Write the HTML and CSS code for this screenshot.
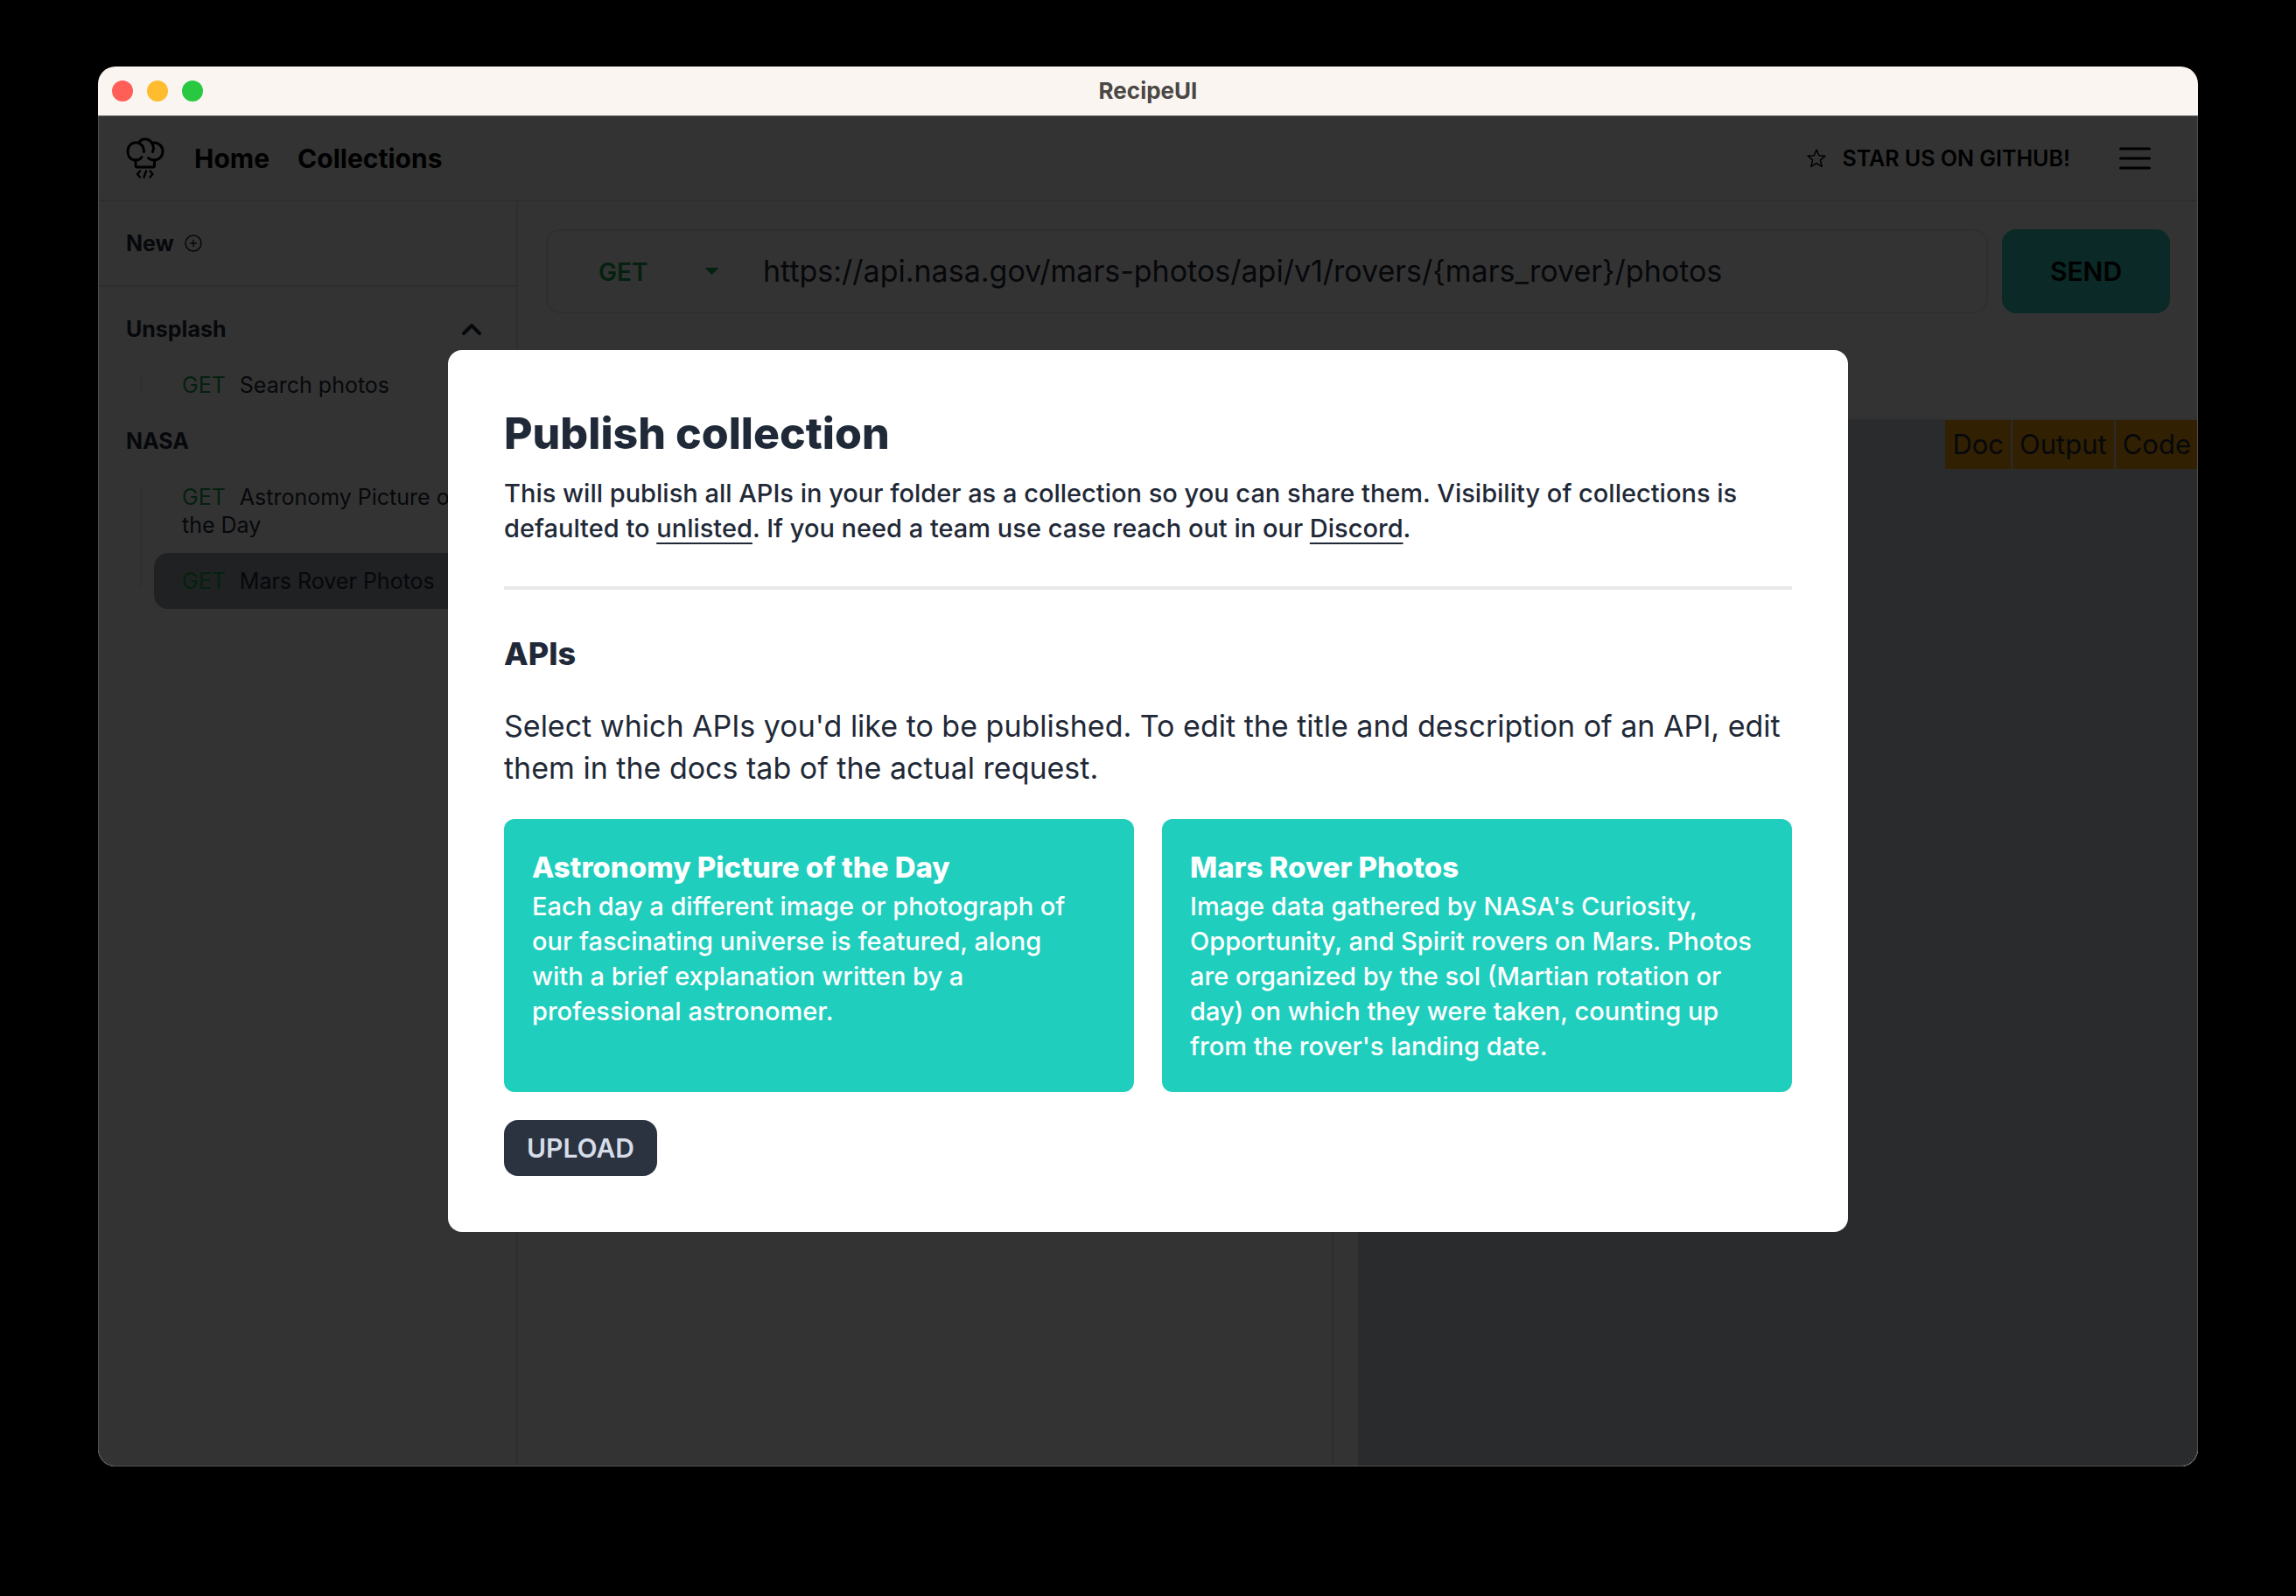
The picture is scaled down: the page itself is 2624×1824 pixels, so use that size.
FILE: index.html
```html
<!DOCTYPE html>
<html lang="en">
<head>
<meta charset="utf-8">
<meta name="viewport" content="width=device-width, initial-scale=1">
<title>RecipeUI</title>
<link rel="stylesheet" href="styles.css">
</head>
<body>
<div class="window">
  <header class="titlebar">
    <div class="lights"><span class="light red"></span><span class="light yellow"></span><span class="light green"></span></div>
    <span class="titlebar-name">RecipeUI</span>
  </header>
  <div class="app">
    <nav class="navbar">
      <a href="#" class="logo" aria-label="RecipeUI">
        <svg viewBox="0 0 44 48" width="44" height="48" fill="none" stroke="#000" stroke-width="3" stroke-linecap="round" stroke-linejoin="round">
          <path d="M11 26V32Q11 34 13 34H30.500Q32.500 34 32.500 32V26"/>
          <path d="M11 26C5 26 2 21.500 2 16C2 10 6 6 11.500 6C12.500 6 13.500 6 14.500 6.500C16 3.500 18.500 2 21.500 2C25 2 28 3.500 29.500 6.500C30.500 6 31.500 6 32.500 6C38 6.500 42 10.500 42 16C42 21.500 38 26 32.500 26"/>
          <path d="M14.500 6.500C18.500 8 20.500 11.500 20.500 16.500M29.500 6.500C32 10 32 13 30.500 16.500M11 26C14.500 26 16.500 25 18 22.500M32.500 26C29 26 27 25 25.500 23.500"/>
          <path stroke-width="2.400" d="M16 38.500L13 42L16 45.500M23 38.500L20.500 45.500M27.500 38.500L30.500 42L27.500 45.500"/>
        </svg>
      </a>
      <a href="#" class="nav-link">Home</a>
      <a href="#" class="nav-link">Collections</a>
      <a href="#" class="star-link">
        <svg viewBox="0 0 20 20" width="22" height="22" fill="none" stroke="#000" stroke-width="1.400" stroke-linejoin="round"><path d="M10 1L12.500 7L19 7.500L14 11.700L15.600 18.500L10 15L4.400 18.500L6 11.700L1 7.500L7.500 7Z"/></svg>
        STAR US ON GITHUB!
      </a>
      <button class="menu-button" aria-label="Menu">
        <svg viewBox="0 0 36 26" width="36" height="26" stroke="#000" stroke-width="3" stroke-linecap="round"><path d="M1.500 2H34.500M1.500 13H34.500M1.500 24H34.500"/></svg>
      </button>
    </nav>
    <div class="body">
      <aside class="sidebar">
        <button class="new-button">New
          <svg viewBox="0 0 20 20" width="20" height="20" fill="none" stroke="#1f2937" stroke-width="1.500" stroke-linecap="round"><circle cx="10" cy="10" r="9"/><path d="M10 6.500V13.500M6.500 10H13.500"/></svg>
        </button>
        <div class="tree">
          <button class="folder">Unsplash
            <svg viewBox="0 0 22 14" width="22" height="14" fill="none" stroke="#1f2937" stroke-width="4" stroke-linecap="round" stroke-linejoin="round"><path d="M2 12L11 3L20 12"/></svg>
          </button>
          <ul class="requests">
            <li><a href="#" class="request"><span class="verb">GET</span>Search photos</a></li>
          </ul>
          <button class="folder">NASA</button>
          <ul class="requests">
            <li><a href="#" class="request"><span class="verb">GET</span>Astronomy Picture of the Day</a></li>
            <li><a href="#" class="request selected"><span class="verb">GET</span>Mars Rover Photos</a></li>
          </ul>
        </div>
      </aside>
      <main class="main">
        <div class="urlbar">
          <div class="urlbox">
            <select class="method" aria-label="Method"><option>GET</option></select>
            <input class="url" aria-label="URL" value="https://api.nasa.gov/mars-photos/api/v1/rovers/{mars_rover}/photos">
          </div>
          <button class="send">SEND</button>
        </div>
        <div class="panes">
          <div class="pane-left"></div>
          <div class="pane-right">
            <div class="tabs">
              <button class="tab">Doc</button>
              <button class="tab">Output</button>
              <button class="tab">Code</button>
            </div>
          </div>
        </div>
      </main>
    </div>
    <div class="backdrop">
      <section class="modal" role="dialog" aria-labelledby="modal-title">
        <h1 class="modal-title" id="modal-title">Publish collection</h1>
        <p class="lead">This will publish all APIs in your folder as a collection so you can share them. Visibility of collections is defaulted to <span class="underlined">unlisted</span>. If you need a team use case reach out in our <a href="#">Discord</a>.</p>
        <hr class="divider">
        <h2 class="section-title">APIs</h2>
        <p class="hint">Select which APIs you'd like to be published. To edit the title and description of an API, edit them in the docs tab of the actual request.</p>
        <div class="cards">
          <button class="card">
            <span class="card-title">Astronomy Picture of the Day</span>
            <span class="card-text">Each day a different image or photograph of our fascinating universe is featured, along with a brief explanation written by a professional astronomer.</span>
          </button>
          <button class="card">
            <span class="card-title">Mars Rover Photos</span>
            <span class="card-text">Image data gathered by NASA's Curiosity, Opportunity, and Spirit rovers on Mars. Photos are organized by the sol (Martian rotation or day) on which they were taken, counting up from the rover's landing date.</span>
          </button>
        </div>
        <button class="upload">UPLOAD</button>
      </section>
    </div>
  </div>
</div>
</body>
</html>
```
FILE: styles.css
```css
*, *::before, *::after { box-sizing: border-box; }
body {
  margin: 0;
  padding: 76px 112px 148px;
  background: #000;
  color: #1f2937;
  font-family: Inter, "Liberation Sans", sans-serif;
  font-size: 30px;
}
button, input, select { font: inherit; color: inherit; background: none; border: 0; margin: 0; padding: 0; text-align: left; }
h1, h2, p, ul { margin: 0; padding: 0; }
ul { list-style: none; }
a { color: inherit; text-decoration: none; }
svg { flex: none; display: block; }

.window {
  display: flex;
  flex-direction: column;
  min-height: calc(100vh - 224px);
  border-radius: 20px;
  overflow: hidden;
}
.titlebar {
  display: grid;
  grid-template-columns: 1fr auto 1fr;
  align-items: center;
  height: 56px;
  padding: 0 16px;
  background: #faf5f1;
}
.lights { display: flex; gap: 16px; }
.light { width: 24px; height: 24px; border-radius: 50%; }
.red { background: #ff5f57; }
.yellow { background: #febc2e; }
.green { background: #28c840; }
.titlebar-name { padding-bottom: 2px; color: #4b4744; font-size: 26px; font-weight: 700; }

.app { position: relative; flex: 1; display: flex; flex-direction: column; background: #fff; }
.navbar {
  display: flex;
  align-items: center;
  height: 98px;
  padding: 2px 54px 0 32px;
  border-bottom: 2px solid #e5e7eb;
  color: #000;
}
.logo { margin-right: 34px; }
.nav-link { margin-right: 32px; font-weight: 700; }
.star-link { display: flex; align-items: center; gap: 18px; margin-left: auto; font-size: 25px; font-weight: 600; }
.menu-button { margin-left: 56px; }

.body { flex: 1; display: flex; }
.sidebar { width: 480px; flex: none; border-right: 2px solid #e5e7eb; font-size: 25px; line-height: 32px; }
.new-button {
  display: flex;
  align-items: center;
  gap: 12px;
  width: 100%;
  height: 98px;
  padding: 0 32px;
  border-bottom: 2px solid #e5e7eb;
  font-weight: 700;
}
.tree { padding: 16px 0; }
.folder {
  display: flex;
  align-items: center;
  justify-content: space-between;
  width: 100%;
  padding: 16px 40px 16px 32px;
  font-weight: 700;
}
.requests { position: relative; margin: 0 32px 0 48px; padding-left: 16px; }
.requests::before { content: ""; position: absolute; left: 0; top: 24px; bottom: 24px; width: 2px; background: #e9eaec; }
.request { display: block; padding: 16px 32px; border-radius: 16px; }
.verb { margin-right: 16px; color: #16a34a; }
.selected { background: #9ca3af; }

.main { flex: 1; min-width: 0; display: flex; flex-direction: column; }
.urlbar { display: flex; gap: 16px; padding: 32px 32px 120px; }
.urlbox { flex: 1; display: flex; align-items: center; height: 96px; padding-left: 58px; border: 2px solid #e5e7eb; border-radius: 16px; }
.method {
  appearance: none;
  width: 138px;
  margin-right: 50px;
  padding-top: 2px;
  color: #16a34a;
  font-size: 28px;
  font-weight: 600;
  background:
    linear-gradient(45deg, transparent 50%, #16a34a 0) right 8px center / 8px 8px no-repeat,
    linear-gradient(135deg, #16a34a 50%, transparent 0) right center / 8px 8px no-repeat;
}
.url { flex: 1; min-width: 0; padding-bottom: 2px; font-size: 34px; }
.send { width: 192px; border-radius: 16px; background: #37cdbe; color: #000; font-weight: 600; text-align: center; }
.panes { flex: 1; display: flex; border-top: 2px solid #f3f4f6; }
.pane-left { flex: 930 1 0; border-right: 2px solid #e5e7eb; }
.pane-right { flex: 960 1 0; margin-left: 28px; background: #d1d5db; }
.tabs { display: flex; justify-content: flex-end; gap: 2px; }
.tab { height: 56px; padding: 0 8px 2px; background: #f59e0b; font-size: 31px; }

.backdrop {
  position: absolute;
  inset: 0;
  display: flex;
  align-items: center;
  justify-content: center;
  background: rgba(0, 0, 0, 0.8);
  box-shadow: inset 0 0 0 1px #505050;
  border-radius: 0 0 20px 20px;
}
.modal { width: 67%; max-width: 1600px; padding: 64px; border-radius: 16px; background: #fff; }
.modal-title { font-size: 50px; line-height: 62px; font-weight: 800; }
.lead { margin-top: 18px; font-size: 29px; line-height: 40px; font-weight: 500; }
.underlined, .lead a { text-decoration: underline; text-decoration-thickness: 2px; text-underline-offset: 6px; }
.divider { height: 4px; margin: 46px 0; border: 0; background: #e8e8e8; }
.section-title { font-size: 36px; line-height: 54px; font-weight: 800; }
.hint { margin-top: 32px; font-size: 34px; line-height: 48px; }
.cards { display: grid; grid-template-columns: 1fr 1fr; gap: 32px; margin: 34px 0 32px; }
.card { display: flex; flex-direction: column; gap: 2px; padding: 32px; border-radius: 12px; background: #20cebe; color: #fff; }
.card-title { font-size: 33px; line-height: 46px; font-weight: 800; }
.card-text { padding-right: 10px; font-size: 29px; line-height: 40px; font-weight: 500; }
.upload { height: 64px; padding: 0 26px; border-radius: 16px; background: #2b3240; color: #d7dde8; font-weight: 600; }
```
